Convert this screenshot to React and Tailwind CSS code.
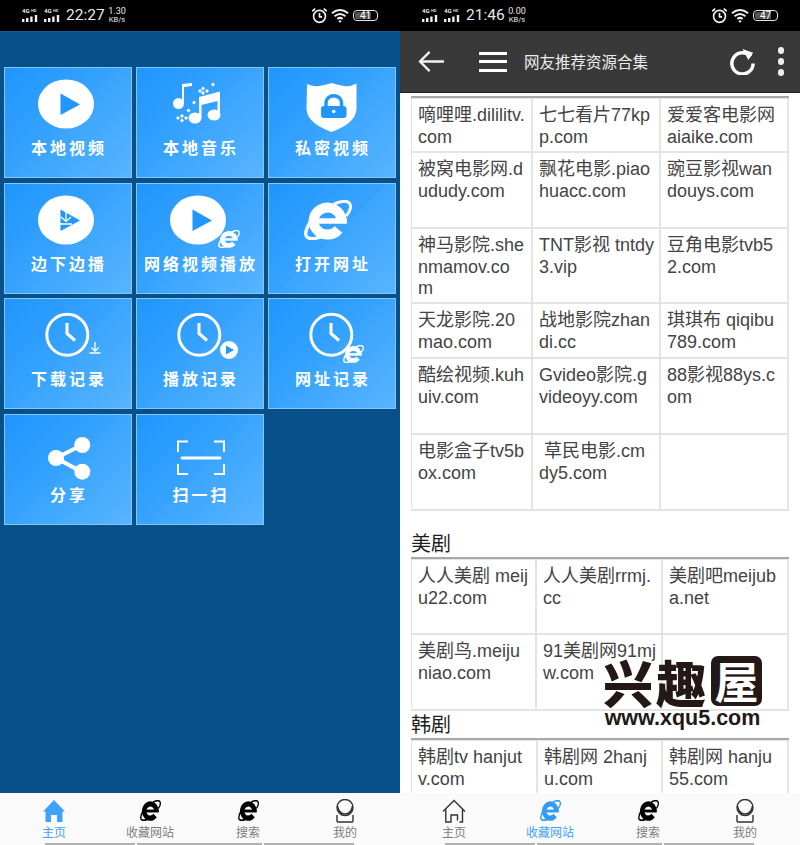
const sans = "font-['Liberation_Sans','Noto_Sans_CJK_SC',sans-serif]"
const blue = '#2196fd'

// flattened e logo, same drawing is used on the tiles and in the tab bar
function IeIcon({ x, y, width, height, color = '#fff', className }) {
  return (
    <svg x={x} y={y} width={width} height={height} viewBox="0 0 48 40" preserveAspectRatio="none" className={className} fill="none" stroke={color}>
      <path d="M37.5 20 A14 13.5 0 1 0 34.5 29.5" strokeWidth="10" />
      <path d="M12 21 H43" strokeWidth="5.5" />
      <path d="M30 4 Q43 -1.5 46 4 Q48 9 42 16" strokeWidth="3" />
      <path d="M7.5 20 Q-1 33 3 37 Q8 41 20 35.5" strokeWidth="3.4" />
    </svg>
  )
}

function PlayEllipse({ cx = 62, children }) {
  return (
    <>
      <ellipse cx={cx} cy="37" rx="28" ry="24.5" fill="#fff" />
      <path d={`M${cx - 5.5} 26.5 L${cx + 14} 37.5 L${cx - 5.5} 48 Z`} fill={blue} />
      {children}
    </>
  )
}

function Clock() {
  return (
    <>
      <circle cx="63.3" cy="36.7" r="20.5" fill="none" stroke="#fff" strokeWidth="3" />
      <path d="M63 25 L63 35.5 L71 42.5" fill="none" stroke="#fff" strokeWidth="3" />
    </>
  )
}

const tileIcons = {
  play: <PlayEllipse />,
  music: (
    <g fill="#fff">
      <circle cx="42.5" cy="36.5" r="5.5" />
      <path d="M46 36 L46 17 L56 16 L56 19 L48 20 L48 36 Z" />
      <ellipse cx="59" cy="51" rx="6.5" ry="5.5" />
      <ellipse cx="78" cy="48" rx="6.5" ry="5.5" />
      <path d="M63 51 L63 30 L84 24.5 L84 48 L81.5 48 L81.5 34 L65.5 38 L65.5 51 Z" />
      <path d="M67 19.5 L69 21.5 L67 23.5 L65 21.5 Z M67 24 L69 26 L67 28 L65 26 Z M64 22 L66 24 L64 26 L62 24 Z M71 22 L73 24 L71 26 L69 24 Z M77 15.5 L79 17.5 L77 19.5 L75 17.5 Z M58 33.5 L60 35.5 L58 37.5 L56 35.5 Z M52.5 41.5 L54.5 43.5 L52.5 45.5 L50.5 43.5 Z M46 47 L48 49 L46 51 L44 49 Z M46 51.5 L48 53.5 L46 55.5 L44 53.5 Z M42 49 L44 51 L42 53 L40 51 Z M50 49 L52 51 L50 53 L48 51 Z" />
    </g>
  ),
  shield: (
    <>
      <path
        d="M39 17 Q46 20 51 19 Q58 18 63.5 16 Q70 18 76 19 Q82 20 88.5 16.5 L88.5 42 Q88 56 63.5 65 Q39 56 38.5 42 Z"
        fill="#fff"
      />
      <rect x="53" y="39" width="25.5" height="12" rx="3" fill={blue} />
      <path d="M58 40 L58 35.5 A7.5 6.5 0 0 1 73.5 35.5 L73.5 40" fill="none" stroke={blue} strokeWidth="3.5" />
      <circle cx="65.7" cy="44.5" r="1.8" fill="#fff" />
    </>
  ),
  stream: (
    <>
      <PlayEllipse />
      <path d="M62 27 L62 38 M57 34 L62 38.5 L67 34 M56 41 L68 41" fill="none" stroke="#fff" strokeWidth="1.3" />
    </>
  ),
  net: (
    <PlayEllipse>
      <IeIcon x="82" y="47" width="22" height="18" />
    </PlayEllipse>
  ),
  ie: <IeIcon x="36" y="17" width="48" height="40" />,
  clockDown: (
    <>
      <Clock />
      <path d="M91 44 L91 52.5 M87.5 49.5 L91 53 L94.5 49.5 M85.5 55 L96.5 55" fill="none" stroke="#fff" strokeWidth="1.3" />
    </>
  ),
  clockPlay: (
    <>
      <Clock />
      <circle cx="93" cy="52" r="9" fill="#fff" />
      <path d="M90 47.5 L98 52 L90 56.5 Z" fill={blue} />
    </>
  ),
  clockIe: (
    <>
      <Clock />
      <IeIcon x="75" y="47" width="21" height="18" />
    </>
  ),
  share: (
    <g fill="#fff" stroke="#fff">
      <path d="M78 31 L52 44 L78 58" fill="none" strokeWidth="4" />
      <circle cx="78.3" cy="31" r="8" stroke="none" />
      <circle cx="52" cy="44" r="8" stroke="none" />
      <circle cx="78.3" cy="57.7" r="8" stroke="none" />
    </g>
  ),
  scan: (
    <g fill="none" stroke="#fff" strokeWidth="2">
      <path d="M42 38 L42 27.5 L52 27.5 M78 27.5 L88 27.5 L88 38 M42 50 L42 60 L52 60 M78 60 L88 60 L88 50" />
      <path d="M46 44 L84 44" strokeWidth="3" strokeLinecap="round" />
    </g>
  ),
}

const tiles = [
  ['play', '本地视频'],
  ['music', '本地音乐'],
  ['shield', '私密视频'],
  ['stream', '边下边播'],
  ['net', '网络视频播放'],
  ['ie', '打开网址'],
  ['clockDown', '下载记录'],
  ['clockPlay', '播放记录'],
  ['clockIe', '网址记录'],
  ['share', '分享'],
  ['scan', '扫一扫'],
]

function Tile({ icon, label }) {
  return (
    <div className="w-[128px] h-[111px] flex flex-col items-center border border-[#86c6f8] bg-[linear-gradient(135deg,#1f96fe_0%,#37a3fe_50%,#3aa5fe_50%,#58b4ff_100%)]">
      <svg viewBox="1 1 126 70" className="w-[126px] h-[70px] shrink-0">
        {tileIcons[icon]}
      </svg>
      <span className="mt-[-1px] ml-[2px] text-[16px] leading-[20px] font-bold tracking-[3px] text-white whitespace-nowrap font-['Noto_Sans_CJK_SC',sans-serif]">
        {label}
      </span>
    </div>
  )
}

function StatusBar({ time, speed, battery }) {
  return (
    <div className="h-[31px] shrink-0 bg-black text-[#e8e8e8] flex items-center pl-[22px] pr-[22px] font-['Roboto',sans-serif]">
      {[0, 1].map((i) => (
        <svg key={i} viewBox="0 0 16 14" className="w-[16px] h-[14px] mr-[6px] mt-[-1px]">
          <text x="0" y="5" fontSize="6" fontWeight="700" fill="#f0f0f0">4G</text>
          <text x="9" y="4" fontSize="4" fontWeight="700" fill="#d8d8d8">HD</text>
          <path d="M1.2 14 V11 M5.2 14 V10 M9.4 14 V8.5 M14 14 V7" stroke="#f0f0f0" strokeWidth="2.4" />
        </svg>
      ))}
      <span className="text-[15.5px] w-[43px] whitespace-nowrap">{time}</span>
      <span className="flex flex-col items-center text-[7.5px] leading-[8px] w-[16px] mt-[-1px]">
        <span className="text-[9px] leading-[10px]">{speed}</span>
        <span>KB/s</span>
      </span>
      <span className="flex-1" />
      <svg viewBox="0 0 20 20" className="w-[17px] h-[17px] mr-[3px]" fill="none" stroke="#eee" strokeWidth="2">
        <circle cx="10" cy="11" r="7" />
        <path d="M10 7 V11.5 H13 M1.5 5 L5 2 M18.5 5 L15 2" />
      </svg>
      <svg viewBox="0 0 20 16" className="w-[18px] h-[15px] mr-[4px]" fill="none" stroke="#eee" strokeWidth="2.2">
        <path d="M1 5.5 Q10 -1.5 19 5.5 M4 8.8 Q10 3.8 16 8.8 M7 11.8 Q10 9.5 13 11.8" />
        <circle cx="10" cy="14.5" r="1.3" fill="#eee" stroke="none" />
      </svg>
      <span className="w-[25px] h-[11px] rounded-[4px] border border-[#e8e8e8] flex items-center justify-center text-[10px] leading-[10px] text-white bg-[linear-gradient(90deg,#555_72%,transparent_72%)] bg-clip-content p-[1px]">
        {battery}
      </span>
    </div>
  )
}

function HomeIcon({ filled }) {
  return filled ? (
    <svg viewBox="0 0 24 24" className="w-[24px] h-[24px]" fill="#3ea2f8">
      <path d="M12 1 L23 12.5 L20.5 12.5 L20.5 23 L15 23 L15 16 L9 16 L9 23 L3.5 23 L3.5 12.5 L1 12.5 Z" />
    </svg>
  ) : (
    <svg viewBox="0 0 24 24" className="w-[24px] h-[24px]" fill="none" stroke="#333" strokeWidth="1.4">
      <path d="M1 12.5 L12 1.5 L23 12.5 M3.8 10.5 L3.8 23 L9 23 L9 16 L15.5 16 L15.5 21.5 M20.5 10.5 L20.5 23 L17.5 23" />
    </svg>
  )
}

function MeIcon() {
  return (
    <svg viewBox="0 0 24 24" className="w-[24px] h-[24px]" fill="none" stroke="#333" strokeWidth="1.4">
      <circle cx="12" cy="8.5" r="8" />
      <path d="M4.5 7 Q6 15 12 15 Q18 15 19.5 7" />
      <path d="M4 16 L4 22 Q4 23 5 23 L19 23 Q20 23 20 22 L20 16" />
    </svg>
  )
}

function TabBar({ active }) {
  const tabs = ['主页', '收藏网站', '搜索', '我的']
  return (
    <div className="h-[52px] shrink-0 bg-[#fafafa] flex flex-col">
      <div className="grid grid-cols-[96px_96px_100px_94px] pl-[6px] pt-[5px]">
        {tabs.map((label, i) => (
          <div key={label} className="flex flex-col items-center">
            <div className="h-[25px] flex items-center justify-center">
              {i === 0 && <HomeIcon filled={active === 0} />}
              {(i === 1 || i === 2) && <IeIcon width="21" height="21" color={active === i ? '#2f9bf6' : '#000'} />}
              {i === 3 && <MeIcon />}
            </div>
            <span className={`text-[12px] leading-[16px] mt-[1px] font-['Noto_Sans_CJK_SC',sans-serif] ${active === i ? 'text-[#3ea2f8]' : 'text-[#7d7d7d]'}`}>
              {label}
            </span>
          </div>
        ))}
      </div>
      <div className="flex mt-[3px] pl-[45px] gap-[2px]">
        <span className="w-[90px] h-[2px] bg-[#b0b0b0]" />
        <span className="w-[125px] h-[2px] bg-[#b0b0b0]" />
        <span className="w-[90px] h-[2px] bg-[#b0b0b0]" />
      </div>
    </div>
  )
}

const table1 = [
  ['h-[54px]', ['嘀哩哩.dililitv.', 'com'], ['七七看片77kp', 'p.com'], ['爱爱客电影网', 'aiaike.com']],
  ['h-[76px]', ['被窝电影网.d', 'ududy.com'], ['飘花电影.piao', 'huacc.com'], ['豌豆影视wan', 'douys.com']],
  ['h-[75px]', ['神马影院.she', 'nmamov.co', 'm'], ['TNT影视 tntdy', '3.vip'], ['豆角电影tvb5', '2.com']],
  ['h-[55px]', ['天龙影院.20', 'mao.com'], ['战地影院zhan', 'di.cc'], ['琪琪布 qiqibu', '789.com']],
  ['h-[76px]', ['酷绘视频.kuh', 'uiv.com'], ['Gvideo影院.g', 'videoyy.com'], ['88影视88ys.c', 'om']],
  ['h-[76px]', ['电影盒子tv5b', 'ox.com'], ['\u00a0草民电影.cm', 'dy5.com'], []],
]
const table2 = [
  ['h-[75px]', ['人人美剧 meij', 'u22.com'], ['人人美剧rrmj.', 'cc'], ['美剧吧meijub', 'a.net']],
  ['h-[76px]', ['美剧鸟.meiju', 'niao.com'], ['91美剧网91mj', 'w.com'], []],
]
const table3 = [['h-[76px]', ['韩剧tv hanjut', 'v.com'], ['韩剧网 2hanj', 'u.com'], ['韩剧网 hanju', '55.com']]]

function LinkTable({ rows, cols }) {
  return (
    <div className="border-t-[2px] border-[#a8a8a8]">
      <div className="border-t border-l border-[#e4e4e4]">
        {rows.map(([height, ...cells], r) => (
          <div key={r} className={`grid ${cols} ${height}`}>
            {cells.map((lines, c) => (
              <div key={c} className="border-r-[2px] border-b-[2px] border-[#e4e4e4] pl-[6px] pt-[6px] text-[18px] leading-[21.7px] text-[#444] whitespace-nowrap overflow-visible">
                {lines.map((line) => (
                  <div key={line}>{line}</div>
                ))}
              </div>
            ))}
          </div>
        ))}
      </div>
    </div>
  )
}

function Heading({ children }) {
  return <h2 className="text-[20px] leading-[26px] text-[#1e1e1e]">{children}</h2>
}

export default function App() {
  return (
    <div className={`w-[800px] h-[845px] flex overflow-hidden ${sans}`}>
      <div className="w-[400px] h-full flex flex-col">
        <StatusBar time="22:27" speed="1.30" battery="41" />
        <div className="flex-1 bg-[#07508a] border-t border-[#0b5c9c] px-[4px] pt-[35px]">
          <div className="grid grid-cols-[128px_128px_128px] gap-x-[4px] gap-y-[4.5px]">
            {tiles.map(([icon, label]) => (
              <Tile key={label} icon={icon} label={label} />
            ))}
          </div>
        </div>
        <TabBar active={0} />
      </div>

      <div className="w-[400px] h-full flex flex-col relative">
        <StatusBar time="21:46" speed="0.00" battery="47" />
        <div className="h-[62px] shrink-0 bg-[#393939] flex items-center pl-[18px] pr-[16px] border-b border-[#222]">
          <svg viewBox="0 0 28 24" className="w-[27px] h-[23px]" fill="none" stroke="#f2f2f2" strokeWidth="2.4">
            <path d="M27 12 L2 12 M12 2 L2 12 L12 22" />
          </svg>
          <span className="w-[28px] h-[20px] ml-[34px] flex flex-col justify-between">
            <span className="h-[3px] bg-white" />
            <span className="h-[3px] bg-white" />
            <span className="h-[3px] bg-white" />
          </span>
          <span className="ml-[17px] text-[15.5px] text-[#ececec] font-['Noto_Sans_CJK_SC',sans-serif]">网友推荐资源合集</span>
          <span className="flex-1" />
          <svg viewBox="0 0 28 28" className="w-[27px] h-[27px] mr-[22px]" fill="none">
            <path d="M22.5 9 A11 11 0 1 0 25 16" stroke="#fff" strokeWidth="3.6" />
            <path d="M14 1 L25 5 L20 12.5 Z" fill="#fff" />
          </svg>
          <span className="flex flex-col gap-[4.5px]">
            <span className="w-[6.5px] h-[6.5px] rounded-full bg-[#eee]" />
            <span className="w-[6.5px] h-[6.5px] rounded-full bg-[#eee]" />
            <span className="w-[6.5px] h-[6.5px] rounded-full bg-[#eee]" />
          </span>
        </div>
        <div className="flex-1 min-h-0 overflow-hidden bg-white pl-[11px] pr-[11px] pt-[3px]">
          <LinkTable rows={table1} cols="grid-cols-[121px_128px_128px]" />
          <div className="mt-[20px]">
            <Heading>美剧</Heading>
          </div>
          <LinkTable rows={table2} cols="grid-cols-[125px_126px_126px]" />
          <div className="mt-[1px]">
            <Heading>韩剧</Heading>
          </div>
          <LinkTable rows={table3} cols="grid-cols-[126px_125px_126px]" />
        </div>
        <TabBar active={1} />

        <div className="absolute left-[203px] top-[655px] flex flex-col items-center text-[#231815]">
          <div className="h-[52px] flex items-center gap-[5px] font-['Noto_Sans_CJK_SC',sans-serif] font-black text-[50px] leading-[50px]">
            <span>兴</span>
            <span className="ml-[-2px]">趣</span>
            <span className="w-[51px] h-[50px] rounded-[7px] bg-[#231815] text-white text-[44px] leading-[48px] text-center font-bold">屋</span>
          </div>
          <span className="text-[21.5px] leading-[22px] font-bold font-['Liberation_Sans',sans-serif]">www.xqu5.com</span>
        </div>
      </div>
    </div>
  )
}
